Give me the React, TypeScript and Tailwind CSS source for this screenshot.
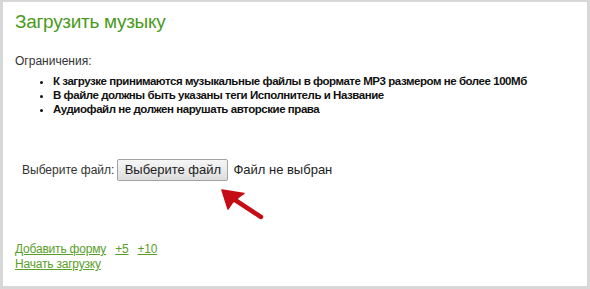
import type { ReactElement } from "react";

const rules = [
  "К загрузке принимаются музыкальные файлы в формате MP3 размером не более 100Мб",
  "В файле должны быть указаны теги Исполнитель и Название",
  "Аудиофайл не должен нарушать авторские права",
];

const Arrow = (): ReactElement => (
  <svg
    className="pointer-events-none absolute left-[212px] top-[182px]"
    width="52"
    height="38"
    viewBox="0 0 52 38"
  >
    <line x1="14" y1="12" x2="46" y2="33" stroke="#c40d14" strokeWidth="4.5" strokeLinecap="round" />
    <polygon
      points="7,6 29,9.5 24,13 17,19 13,25"
      fill="#c40d14"
      stroke="#c40d14"
      strokeWidth="1.5"
      strokeLinejoin="round"
    />
  </svg>
);

export default function App(): ReactElement {
  return (
    <div className="relative h-[289px] w-[590px] overflow-hidden border-x-[3px] border-t-2 border-b-[3px] border-[#d8d8d8] bg-white pl-[12px] pt-[8px] font-['Liberation_Sans',Arial,sans-serif] text-[#333]">
      <h1 className="text-[19px] leading-[23px] tracking-[-0.3px] text-[#4b9a1c]">Загрузить музыку</h1>

      <p className="mt-[21px] text-[12px] leading-[14px]">Ограничения:</p>

      <ul className="mt-[6px] list-disc pl-[38px] text-[11.5px] font-bold leading-[14px] tracking-[-0.45px] text-[#111]">
        {rules.map((rule) => (
          <li key={rule}>{rule}</li>
        ))}
      </ul>

      {/* File picker row */}
      <div className="mt-[43px] flex items-center pl-[7px]">
        <span className="text-[12px] leading-[14px]">Выберите файл:</span>
        <button
          type="button"
          className="ml-[3px] h-[22px] w-[111px] rounded-[2px] border border-[#a3a3a3] bg-gradient-to-b from-[#f6f6f6] to-[#dedede] text-[13px] leading-[20px] text-[#222]"
        >
          Выберите файл
        </button>
        <span className="ml-[5px] text-[13px] leading-[16px] text-[#222]">Файл не выбран</span>
      </div>

      <Arrow />

      {/* Links */}
      <div className="mt-[61px] text-[12px] leading-[15px] tracking-[-0.2px] text-[#5a9e2a]">
        <div className="flex gap-x-[9px]">
          <a href="#" className="underline">Добавить форму</a>
          <a href="#" className="underline">+5</a>
          <a href="#" className="underline">+10</a>
        </div>
        <a href="#" className="underline">Начать загрузку</a>
      </div>
    </div>
  );
}
